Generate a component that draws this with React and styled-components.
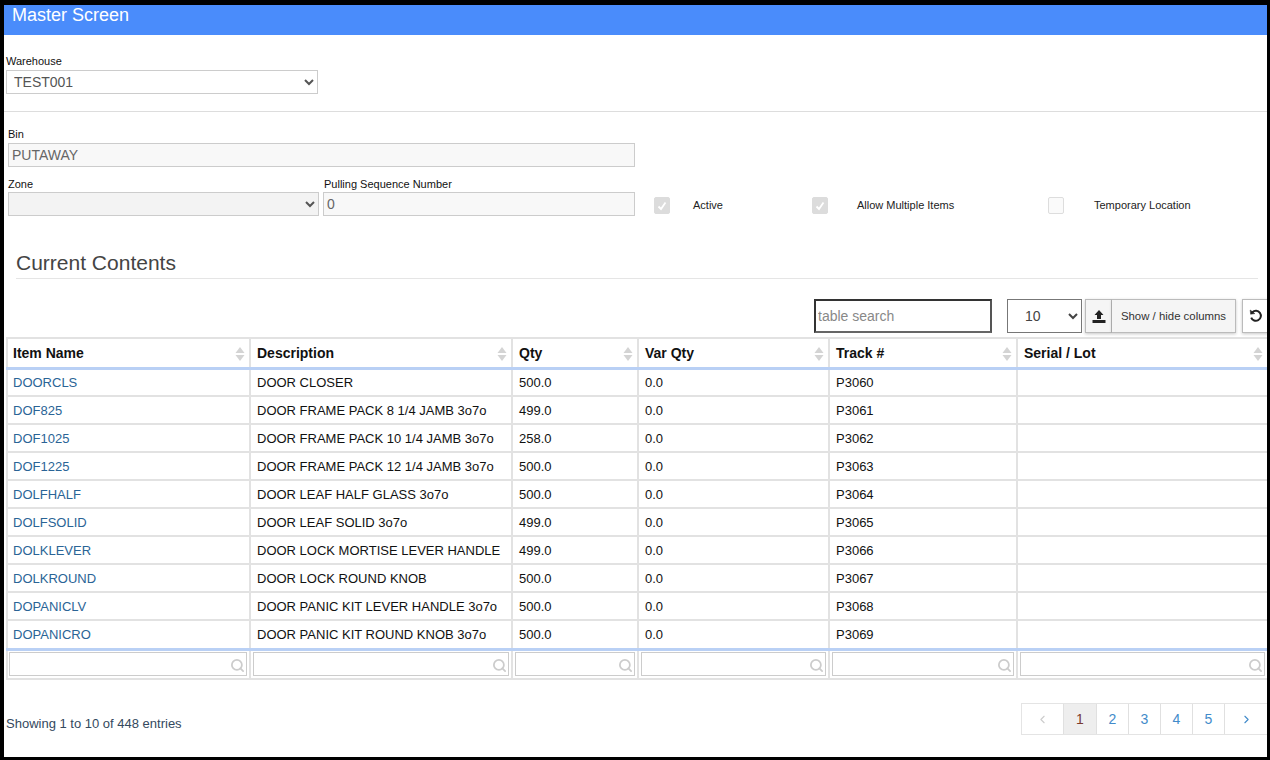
import React from 'react';
import styled, { createGlobalStyle } from 'styled-components';
import { Search, ChevronLeft, ChevronRight } from 'lucide-react';

const GlobalStyle = createGlobalStyle`
  html, body {
    margin: 0;
    padding: 0;
    background: #000;
  }
  * {
    box-sizing: border-box;
  }
`;

const Screen = styled.div`
  width: 1263px;
  height: 752px;
  margin: 5px 0 0 4px;
  background: #fff;
  overflow: hidden;
  font-family: 'Liberation Sans', Arial, sans-serif;
  color: #333;
`;

const TitleBar = styled.div`
  height: 30px;
  padding: 0 8px;
  background: #4a8cfb;
  color: #fff;
  font-size: 18px;
  line-height: 21px;
`;

const WarehouseBlock = styled.div`
  height: 77px;
  padding: 20px 0 0 2px;
  border-bottom: 1px solid #ddd;
`;

const FieldLabel = styled.label`
  display: block;
  height: ${p => (p.$short ? 14 : 15)}px;
  font-size: 11px;
  line-height: 13px;
  color: #111;
`;

const SelectBox = styled.select`
  display: block;
  width: ${p => p.$width}px;
  height: 24px;
  padding: 0 3px;
  border: 1px solid #ccc;
  border-radius: 0;
  background: ${p => (p.disabled ? '#f3f3f3' : '#fff')};
  color: #555;
  font-family: inherit;
  font-size: 14px;
  opacity: 1;
`;

const BinBlock = styled.div`
  padding: 16px 0 0 4px;
`;

const TextField = styled.input`
  display: block;
  width: ${p => p.$width}px;
  height: 24px;
  padding: 0 3px;
  border: 1px solid #ccc;
  background: #f8f8f8;
  color: #666;
  font-family: inherit;
  font-size: 14px;
  opacity: 1;
`;

const FieldRow = styled.div`
  display: flex;
  align-items: flex-end;
  margin-top: 11px;
`;

const Field = styled.div`
  margin-right: ${p => p.$gap || 0}px;
`;

const SequenceLabel = styled(FieldLabel)`
  padding-left: 1px;
`;

const ChecksRow = styled.div`
  display: flex;
  align-items: center;
  height: 24px;
  padding-top: 3px;
  margin-left: 19px;
`;

const CheckItem = styled.div`
  display: flex;
  align-items: center;
  width: ${p => p.$width}px;
`;

const CheckBox = styled.span`
  display: flex;
  align-items: center;
  justify-content: center;
  width: 16px;
  height: 17px;
  margin-right: ${p => p.$gap}px;
  border: 1px solid ${p => (p.$checked ? '#dcdcdc' : '#ddd')};
  border-radius: 2px;
  background: ${p => (p.$checked ? '#dcdcdc' : '#fafafa')};
`;

const CheckLabel = styled.span`
  padding-bottom: 2px;
  font-size: 11px;
  color: #222;
`;

const SectionTitle = styled.h2`
  height: 33px;
  margin: 30px 9px 0 12px;
  border-bottom: 1px solid #e5e5e5;
  color: #444;
  font-size: 21px;
  font-weight: 400;
  line-height: 34px;
`;

const Toolbar = styled.div`
  display: flex;
  align-items: stretch;
  height: 34px;
  margin-top: 20px;
  padding-left: 810px;
  width: 1300px;
`;

const TableSearch = styled.input`
  width: 178px;
  height: 34px;
  padding: 0 2px;
  border: 2px solid #333;
  border-bottom-color: #666;
  border-right-color: #555;
  outline: none;
  font-family: inherit;
  font-size: 14px;
  &::placeholder {
    color: #888;
  }
`;

const PageSize = styled.select`
  width: 75px;
  height: 34px;
  margin-left: 15px;
  padding-left: 13px;
  border: 1px solid #777;
  border-radius: 0;
  background: #fff;
  color: #444;
  font-family: inherit;
  font-size: 14px;
`;

const ButtonGroup = styled.div`
  display: flex;
  margin-left: 3px;
`;

const ToolButton = styled.button`
  display: flex;
  align-items: center;
  justify-content: center;
  width: ${p => p.$width}px;
  height: 34px;
  margin-left: ${p => p.$offset || 0}px;
  padding: 0;
  border: 1px solid #bbb;
  border-left-width: ${p => (p.$joined ? 0 : 1)}px;
  background: #f5f5f5;
  box-shadow: 0 1px 3px rgba(0, 0, 0, 0.22);
  color: #333;
  font-family: inherit;
  font-size: 11.4px;
`;

const WhiteButton = styled(ToolButton)`
  background: #fff;
`;

const TableWrap = styled.div`
  margin: 4px 0 0 2px;
  width: 1261px;
`;

const Grid = styled.table`
  width: 1261px;
  table-layout: fixed;
  border-collapse: collapse;
  font-size: 13px;
  color: #111;
`;

const HeadCell = styled.th`
  position: relative;
  height: 30px;
  padding: 0 6px;
  border: 2px solid #e2e2e2;
  border-bottom: 3px solid #b9d0f5;
  font-size: 14px;
  font-weight: 700;
  text-align: left;
  color: #111;
  &:first-child {
    padding-left: 5px;
  }
`;

const SortArrows = styled.svg`
  position: absolute;
  top: 8px;
  right: 4px;
  width: 10px;
  height: 14px;
  fill: #d4d4d4;
`;

const BodyCell = styled.td`
  height: 28px;
  padding: 0 6px;
  border: 2px solid #e2e2e2;
  white-space: nowrap;
  overflow: hidden;
  &:first-child {
    padding-left: 5px;
  }
`;

const LastRow = styled.tr`
  & td {
    height: 29px;
    border-bottom: 3px solid #b9d0f5;
  }
`;

const ItemLink = styled.a`
  color: #2a6496;
  text-decoration: none;
`;

const FilterCell = styled.td`
  position: relative;
  height: 30px;
  padding: 0 2px;
  border: 2px solid #e2e2e2;
  border-top: 0;
  &:first-child {
    padding-left: 1px;
  }
`;

const FilterInput = styled.input`
  display: block;
  width: 100%;
  height: 24px;
  border: 1px solid #ccc;
  background: #fff;
`;

const FilterIcon = styled(Search)`
  position: absolute;
  top: 7px;
  right: 4px;
  color: #ccc;
`;

const FooterRow = styled.div`
  display: flex;
  justify-content: space-between;
  align-items: center;
  margin-top: 23px;
  padding-left: 2px;
  height: 32px;
`;

const Showing = styled.div`
  padding-top: 8px;
  font-size: 13px;
  color: #34495e;
`;

const Pager = styled.div`
  display: flex;
  height: 32px;
  border: 1px solid #e4e4e4;
  border-right: 0;
`;

const PageItem = styled.span`
  display: flex;
  align-items: center;
  justify-content: center;
  width: ${p => p.$width || 32}px;
  border-left: ${p => (p.$first ? 0 : '1px solid #e0e0e0')};
  background: ${p => (p.$active ? '#eee' : '#fff')};
  color: ${p => (p.$active ? '#7a3b2e' : p.$disabled ? '#ccc' : '#428bca')};
  font-size: 14px;
`;

const columns = [
  { name: 'Item Name', width: 243 },
  { name: 'Description', width: 262 },
  { name: 'Qty', width: 126 },
  { name: 'Var Qty', width: 191 },
  { name: 'Track #', width: 188 },
  { name: 'Serial / Lot', width: 251 }
];

const rows = [
  ['DOORCLS', 'DOOR CLOSER', '500.0', 'P3060'],
  ['DOF825', 'DOOR FRAME PACK 8 1/4 JAMB 3o7o', '499.0', 'P3061'],
  ['DOF1025', 'DOOR FRAME PACK 10 1/4 JAMB 3o7o', '258.0', 'P3062'],
  ['DOF1225', 'DOOR FRAME PACK 12 1/4 JAMB 3o7o', '500.0', 'P3063'],
  ['DOLFHALF', 'DOOR LEAF HALF GLASS 3o7o', '500.0', 'P3064'],
  ['DOLFSOLID', 'DOOR LEAF SOLID 3o7o', '499.0', 'P3065'],
  ['DOLKLEVER', 'DOOR LOCK MORTISE LEVER HANDLE', '499.0', 'P3066'],
  ['DOLKROUND', 'DOOR LOCK ROUND KNOB', '500.0', 'P3067'],
  ['DOPANICLV', 'DOOR PANIC KIT LEVER HANDLE 3o7o', '500.0', 'P3068'],
  ['DOPANICRO', 'DOOR PANIC KIT ROUND KNOB 3o7o', '500.0', 'P3069']
];

const CheckMark = () => (
  <svg width="12" height="12" viewBox="0 0 12 12" fill="none" stroke="#fff" strokeWidth="1.8">
    <path d="M2.5 6.5 L5 9 L9.5 2.5" />
  </svg>
);

const UploadIcon = () => (
  <svg width="14" height="15" viewBox="0 0 14 15" fill="#222">
    <path d="M7 1 L11.5 6 H9 V10 H5 V6 H2.5 Z" />
    <path d="M0.5 11 H13.5 V14 H0.5 Z" />
  </svg>
);

const UndoIcon = () => (
  <svg width="14" height="14" viewBox="0 0 14 14" fill="none" stroke="#222" strokeWidth="2">
    <path d="M3.4 3.2 A5 5 0 1 1 2.2 8.6" />
    <path d="M1.2 1 L1.6 5.2 L5.8 4.6 Z" fill="#222" strokeWidth="0.5" />
  </svg>
);

const Row = ({ row, last }) => {
  const Tr = last ? LastRow : 'tr';
  return (
    <Tr>
      <BodyCell><ItemLink href="#">{row[0]}</ItemLink></BodyCell>
      <BodyCell>{row[1]}</BodyCell>
      <BodyCell>{row[2]}</BodyCell>
      <BodyCell>0.0</BodyCell>
      <BodyCell>{row[3]}</BodyCell>
      <BodyCell />
    </Tr>
  );
};

const App = () => (
  <Screen>
    <GlobalStyle />
    <TitleBar>Master Screen</TitleBar>

    <WarehouseBlock>
      <FieldLabel>Warehouse</FieldLabel>
      <SelectBox $width={312} defaultValue="TEST001">
        <option>TEST001</option>
      </SelectBox>
    </WarehouseBlock>

    <BinBlock>
      <FieldLabel>Bin</FieldLabel>
      <TextField $width={627} value="PUTAWAY" disabled readOnly />
      <FieldRow>
        <Field $gap={4}>
          <FieldLabel $short>Zone</FieldLabel>
          <SelectBox $width={311} disabled>
            <option></option>
          </SelectBox>
        </Field>
        <Field>
          <SequenceLabel $short>Pulling Sequence Number</SequenceLabel>
          <TextField $width={312} value="0" disabled readOnly />
        </Field>
        <ChecksRow>
          <CheckItem $width={158}>
            <CheckBox $checked $gap={23}><CheckMark /></CheckBox>
            <CheckLabel>Active</CheckLabel>
          </CheckItem>
          <CheckItem $width={236}>
            <CheckBox $checked $gap={29}><CheckMark /></CheckBox>
            <CheckLabel>Allow Multiple Items</CheckLabel>
          </CheckItem>
          <CheckItem $width={200}>
            <CheckBox $gap={30} />
            <CheckLabel>Temporary Location</CheckLabel>
          </CheckItem>
        </ChecksRow>
      </FieldRow>
    </BinBlock>

    <SectionTitle>Current Contents</SectionTitle>

    <Toolbar>
      <TableSearch placeholder="table search" />
      <PageSize defaultValue="10">
        <option>10</option>
      </PageSize>
      <ButtonGroup>
        <ToolButton $width={27}><UploadIcon /></ToolButton>
        <ToolButton $width={124} $joined>Show / hide columns</ToolButton>
      </ButtonGroup>
      <WhiteButton $width={27} $offset={6}><UndoIcon /></WhiteButton>
    </Toolbar>

    <TableWrap>
      <Grid>
        <colgroup>
          {columns.map(c => <col key={c.name} style={{ width: c.width }} />)}
        </colgroup>
        <thead>
          <tr>
            {columns.map(c => (
              <HeadCell key={c.name}>
                {c.name}
                <SortArrows viewBox="0 0 10 14">
                  <path d="M5 0 L9.5 6 H0.5 Z" />
                  <path d="M5 14 L9.5 8 H0.5 Z" />
                </SortArrows>
              </HeadCell>
            ))}
          </tr>
        </thead>
        <tbody>
          {rows.map((row, i) => <Row key={row[0]} row={row} last={i === rows.length - 1} />)}
          <tr>
            {columns.map(c => (
              <FilterCell key={c.name}>
                <FilterInput />
                <FilterIcon size={15} strokeWidth={2.8} />
              </FilterCell>
            ))}
          </tr>
        </tbody>
      </Grid>
    </TableWrap>

    <FooterRow>
      <Showing>Showing 1 to 10 of 448 entries</Showing>
      <Pager>
        <PageItem $first $disabled $width={41}><ChevronLeft size={13} /></PageItem>
        <PageItem $active $width={33}>1</PageItem>
        <PageItem>2</PageItem>
        <PageItem>3</PageItem>
        <PageItem>4</PageItem>
        <PageItem>5</PageItem>
        <PageItem $width={43}><ChevronRight size={13} /></PageItem>
      </Pager>
    </FooterRow>
  </Screen>
);

export default App;
